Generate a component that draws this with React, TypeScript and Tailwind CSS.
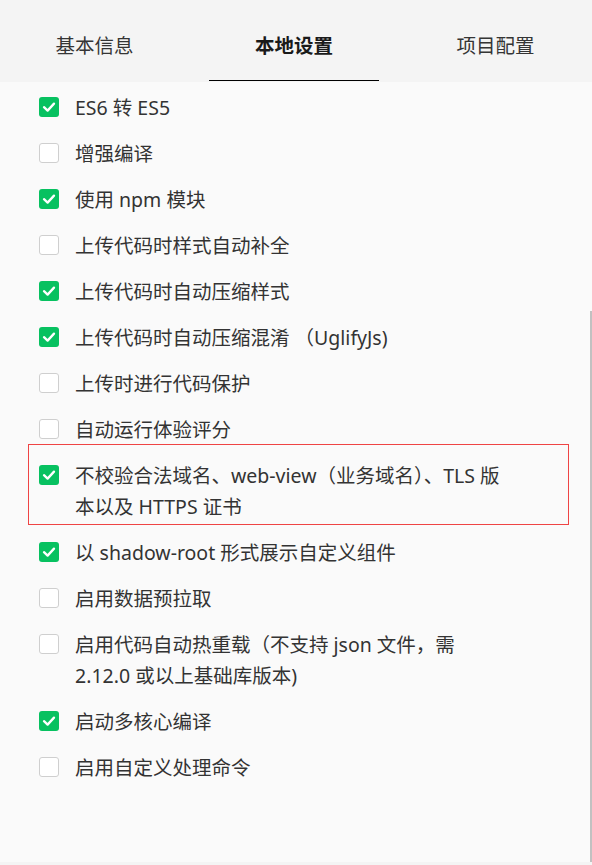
import React from "react";

type Item = { checked: boolean; lines: string[]; highlight?: boolean };

const items: Item[] = [
  { checked: true, lines: ["ES6 转 ES5"] },
  { checked: false, lines: ["增强编译"] },
  { checked: true, lines: ["使用 npm 模块"] },
  { checked: false, lines: ["上传代码时样式自动补全"] },
  { checked: true, lines: ["上传代码时自动压缩样式"] },
  { checked: true, lines: ["上传代码时自动压缩混淆 （UglifyJs)"] },
  { checked: false, lines: ["上传时进行代码保护"] },
  { checked: false, lines: ["自动运行体验评分"] },
  {
    checked: true,
    lines: ["不校验合法域名、web-view（业务域名）、TLS 版", "本以及 HTTPS 证书"],
    highlight: true,
  },
  { checked: true, lines: ["以 shadow-root 形式展示自定义组件"] },
  { checked: false, lines: ["启用数据预拉取"] },
  {
    checked: false,
    lines: ["启用代码自动热重载（不支持 json 文件，需", "2.12.0 或以上基础库版本)"],
  },
  { checked: true, lines: ["启动多核心编译"] },
  { checked: false, lines: ["启用自定义处理命令"] },
];

function Box({ checked }: { checked: boolean }) {
  if (checked) {
    return (
      <div className="w-[20px] h-[20px] rounded-[3px] bg-[#07c160] flex items-center justify-center shrink-0">
        <svg width="20" height="20" viewBox="0 0 20 20">
          <path
            d="M5 10.2 L8.6 13.6 L15 6.6"
            fill="none"
            stroke="#ffffff"
            strokeWidth="2.3"
            strokeLinecap="round"
            strokeLinejoin="round"
          />
        </svg>
      </div>
    );
  }
  return (
    <div className="w-[20px] h-[20px] rounded-[3px] bg-white border border-[#cfcfcf] shrink-0" />
  );
}

export default function App() {
  const font = { fontFamily: '"Noto Sans", "Noto Sans CJK SC", sans-serif' };
  return (
    <div
      className="relative w-[592px] h-[865px] bg-[#f4f4f4] overflow-hidden text-[#333333]"
      style={font}
    >
      {/* Tabs */}
      <div className="h-[82px] bg-[#f4f4f4] grid grid-cols-[189px_210px_193px]">
        <div className="flex items-center justify-center pt-[10px] text-[19.5px] text-[#353535]">
          基本信息
        </div>
        <div className="relative flex items-center justify-center pt-[10px] text-[19.5px] font-bold text-[#1a1a1a]">
          本地设置
          <div className="absolute bottom-[1px] left-[20px] w-[170px] h-[1.5px] bg-black" />
        </div>
        <div className="flex items-center justify-center pt-[10px] text-[19.5px] text-[#353535]">
          项目配置
        </div>
      </div>

      {/* Content */}
      <div className="relative h-[780px] bg-[#fafafa] pt-[2px]">
        {items.map((it, i) => (
          <div key={i} className="relative flex items-start py-[7.5px] pl-[39px]">
            <div className="h-[31px] flex items-center">
              <Box checked={it.checked} />
            </div>
            <div className="ml-[16px] text-[19.5px] leading-[31px] whitespace-nowrap text-[#333333]">
              {it.lines.map((l, j) => (
                <div key={j}>{l}</div>
              ))}
            </div>
            {it.highlight && (
              <div className="absolute left-[28px] top-[-8px] w-[541px] h-[81px] border border-[#ef4444] pointer-events-none" />
            )}
          </div>
        ))}
        {/* scrollbar */}
        <div className="absolute right-0 top-[229px] w-[2px] h-[551px] bg-[#c1c1c1]" />
      </div>
    </div>
  );
}
